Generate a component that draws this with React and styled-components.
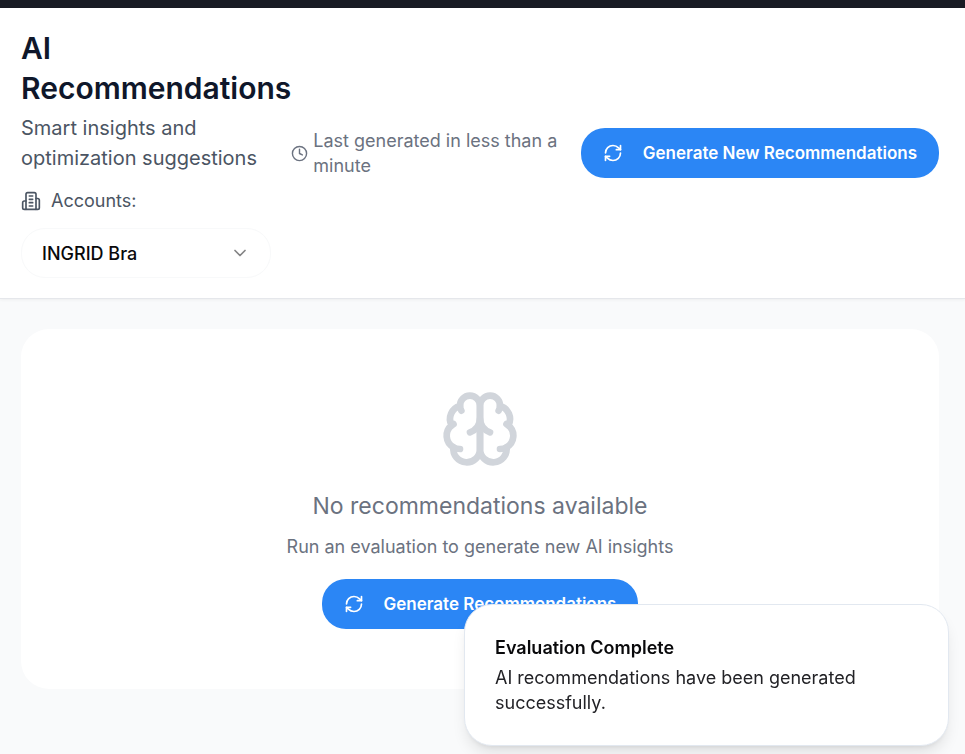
import React, { useState } from 'react';
import styled, { createGlobalStyle } from 'styled-components';
import { ChevronDown, Clock, RefreshCw } from 'lucide-react';

const GlobalStyle = createGlobalStyle`
  *, *::before, *::after { box-sizing: border-box; }
  body {
    margin: 0;
    background: #f9fafb;
    color: #111827;
    font-family: Inter, "Liberation Sans", sans-serif;
    font-size: 18px;
    line-height: 25px;
  }
  h1, h2, p { margin: 0; }
  button, select { font: inherit; }
`;

const Page = styled.div`
  min-height: 100vh;
  overflow-x: hidden;
`;

const TopBar = styled.div`
  height: 8px;
  background: #191b24;
`;

const Header = styled.header`
  display: grid;
  grid-template-columns: min-content 1fr auto;
  column-gap: 20px;
  align-items: center;
  padding: 20px 26px 20px 21px;
  background: #fff;
  border-bottom: 1px solid #e5e7eb;
  box-shadow: 0 1px 3px rgba(0, 0, 0, 0.05);
`;

const Intro = styled.div`
  display: flex;
  flex-direction: column;
  gap: 15px;
  margin-right: -20px;
`;

const Title = styled.h1`
  margin-bottom: 5px;
  color: #0f172a;
  font-size: 30px;
  font-weight: 600;
  line-height: 40px;
`;

const Subtitle = styled.p`
  color: #4b5563;
  font-size: 20px;
  line-height: 30px;
`;

const AccountLabel = styled.label`
  display: flex;
  align-items: center;
  gap: 10px;
  color: #4b5563;
`;

const SelectBox = styled.div`
  position: relative;
  width: 250px;
  max-width: 100%;
  color: #09090b;

  svg {
    position: absolute;
    top: 15px;
    right: 21px;
    opacity: 0.5;
    pointer-events: none;
  }
`;

const Select = styled.select`
  width: 100%;
  height: 50px;
  padding: 0 50px 0 20px;
  appearance: none;
  border: 1px solid #f8f9fa;
  border-radius: 24px;
  background: #fff;
  color: inherit;
  font-weight: 500;
`;

const Status = styled.div`
  display: flex;
  align-items: center;
  gap: 5px;
  color: #6b7280;

  svg { flex: none; }
`;

const Button = styled.button`
  display: inline-flex;
  align-items: center;
  justify-content: center;
  gap: 20px;
  height: 50px;
  padding: 0 22px;
  border: 0;
  border-radius: 24px;
  background: #2b86f5;
  color: #fff;
  font-size: 17px;
  font-weight: 600;
  white-space: nowrap;
  cursor: pointer;
`;

const Main = styled.main`
  padding: 30px 26px 30px 21px;
`;

const EmptyCard = styled.section`
  display: flex;
  flex-direction: column;
  align-items: center;
  padding: 60px 20px;
  border-radius: 28px;
  background: #fff;
  color: #6b7280;
  text-align: center;
`;

const BrainSvg = styled.svg`
  width: 80px;
  height: 80px;
  margin-bottom: 20px;
  color: #d1d5db;
`;

const EmptyTitle = styled.h2`
  margin-bottom: 10px;
  font-size: 23px;
  font-weight: 400;
  line-height: 35px;
`;

const EmptyText = styled.p`
  margin-bottom: 20px;
`;

const Toast = styled.div`
  position: fixed;
  right: 16px;
  bottom: 8px;
  width: 485px;
  max-width: calc(100vw - 32px);
  padding: 30px;
  border: 1px solid #e2e8f0;
  border-radius: 28px;
  background: #fff;
  box-shadow: 0 10px 15px -3px rgba(0, 0, 0, 0.1), 0 4px 6px -4px rgba(0, 0, 0, 0.1);
`;

const ToastTitle = styled.p`
  margin-bottom: 5px;
  color: #09090b;
  font-weight: 600;
`;

const ToastText = styled.p`
  color: #222226;
`;

function BuildingIcon() {
  return (
    <svg
      width="20"
      height="20"
      viewBox="0 0 24 24"
      fill="none"
      stroke="currentColor"
      strokeWidth="2"
      strokeLinecap="round"
      strokeLinejoin="round"
      aria-hidden="true"
    >
      <path d="M6 22V4a2 2 0 0 1 2-2h8a2 2 0 0 1 2 2v18Z" />
      <path d="M6 12H4a2 2 0 0 0-2 2v6a2 2 0 0 0 2 2h2" />
      <path d="M18 9h2a2 2 0 0 1 2 2v9a2 2 0 0 1-2 2h-2" />
      <path d="M10 6h4" />
      <path d="M10 10h4" />
      <path d="M10 14h4" />
      <path d="M10 18h4" />
    </svg>
  );
}

function BrainIcon() {
  return (
    <BrainSvg
      viewBox="0 0 24 24"
      fill="none"
      stroke="currentColor"
      strokeWidth="2"
      strokeLinecap="round"
      strokeLinejoin="round"
      aria-hidden="true"
    >
      <path d="M12 5a3 3 0 1 0-5.997.125 4 4 0 0 0-2.526 5.77 4 4 0 0 0 .556 6.588A4 4 0 1 0 12 18Z" />
      <path d="M12 5a3 3 0 1 1 5.997.125 4 4 0 0 1 2.526 5.77 4 4 0 0 1-.556 6.588A4 4 0 1 1 12 18Z" />
      <path d="M15 13a4.5 4.5 0 0 1-3-4 4.5 4.5 0 0 1-3 4" />
      <path d="M17.599 6.5a3 3 0 0 0 .399-1.375" />
      <path d="M6.003 5.125A3 3 0 0 0 6.401 6.5" />
      <path d="M3.477 10.896a4 4 0 0 1 .585-.396" />
      <path d="M19.938 10.5a4 4 0 0 1 .585.396" />
      <path d="M6 18a4 4 0 0 1-1.967-.516" />
      <path d="M19.967 17.484A4 4 0 0 1 18 18" />
    </BrainSvg>
  );
}

export default function App() {
  const [account, setAccount] = useState('INGRID Bra');

  return (
    <>
      <GlobalStyle />
      <Page>
        <TopBar />
        <Header>
          <Intro>
            <div>
              <Title>AI Recommendations</Title>
              <Subtitle>Smart insights and optimization suggestions</Subtitle>
            </div>
            <AccountLabel htmlFor="account">
              <BuildingIcon />
              Accounts:
            </AccountLabel>
            <SelectBox>
              <Select id="account" value={account} onChange={(e) => setAccount(e.target.value)}>
                <option>INGRID Bra</option>
              </Select>
              <ChevronDown size={20} aria-hidden="true" />
            </SelectBox>
          </Intro>
          <Status>
            <Clock size={17} aria-hidden="true" />
            <span>Last generated in less than a minute</span>
          </Status>
          <Button type="button">
            <RefreshCw size={20} aria-hidden="true" />
            Generate New Recommendations
          </Button>
        </Header>
        <Main>
          <EmptyCard>
            <BrainIcon />
            <EmptyTitle>No recommendations available</EmptyTitle>
            <EmptyText>Run an evaluation to generate new AI insights</EmptyText>
            <Button type="button">
              <RefreshCw size={20} aria-hidden="true" />
              Generate Recommendations
            </Button>
          </EmptyCard>
        </Main>
        <Toast role="status">
          <ToastTitle>Evaluation Complete</ToastTitle>
          <ToastText>AI recommendations have been generated successfully.</ToastText>
        </Toast>
      </Page>
    </>
  );
}
